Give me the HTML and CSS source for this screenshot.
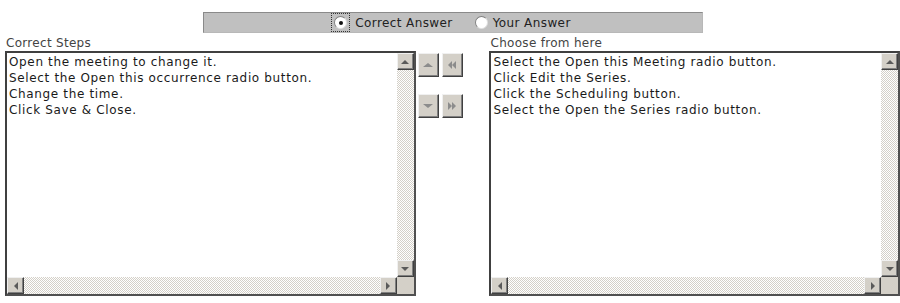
FILE: index.html
```html
<!DOCTYPE html>
<html lang="en">
<head>
    <meta charset="UTF-8">
    <title>Arrange Steps</title>
    <link rel="stylesheet" href="styles.css">
</head>
<body>

    <!-- answer toggle -->
    <div class="bar">
        <label class="opt">
            <span class="focus"><span class="radio checked"></span></span>
            Correct Answer
        </label>
        <label class="opt">
            <span class="radio"></span>
            Your Answer
        </label>
    </div>

    <div class="panels">
        <div class="column">
            <div class="caption">Correct Steps</div>
            <div class="listbox">
                <div class="items">
                    <div>Open the meeting to change it.</div>
                    <div>Select the Open this occurrence radio button.</div>
                    <div>Change the time.</div>
                    <div>Click Save &amp; Close.</div>
                </div>
                <div class="vscroll">
                    <div class="sbtn"><span class="tri up"></span></div>
                    <div class="track"></div>
                    <div class="sbtn"><span class="tri down"></span></div>
                </div>
                <div class="hscroll">
                    <div class="sbtn"><span class="tri left"></span></div>
                    <div class="track"></div>
                    <div class="sbtn"><span class="tri right"></span></div>
                </div>
                <div class="corner"></div>
            </div>
        </div>

        <!-- move buttons -->
        <div class="controls">
            <div class="row">
                <div class="mbtn"><span class="tri up"></span></div>
                <div class="mbtn"><span class="tri left"></span><span class="tri left"></span></div>
            </div>
            <div class="row">
                <div class="mbtn"><span class="tri down"></span></div>
                <div class="mbtn"><span class="tri right"></span><span class="tri right"></span></div>
            </div>
        </div>

        <div class="column">
            <div class="caption">Choose from here</div>
            <div class="listbox">
                <div class="items">
                    <div>Select the Open this Meeting radio button.</div>
                    <div>Click Edit the Series.</div>
                    <div>Click the Scheduling button.</div>
                    <div>Select the Open the Series radio button.</div>
                </div>
                <div class="vscroll">
                    <div class="sbtn"><span class="tri up"></span></div>
                    <div class="track"></div>
                    <div class="sbtn"><span class="tri down"></span></div>
                </div>
                <div class="hscroll">
                    <div class="sbtn"><span class="tri left"></span></div>
                    <div class="track"></div>
                    <div class="sbtn"><span class="tri right"></span></div>
                </div>
                <div class="corner"></div>
            </div>
        </div>
    </div>

</body>
</html>
```

FILE: styles.css
```css
body {
    margin: 0;
    font-family: "DejaVu Sans", Verdana, sans-serif;
    font-size: 12px;
    color: #222;
    background: #fff;
}

.bar {
    width: 498px;
    height: 19px;
    margin: 12px 0 0 203px;
    background-color: #c0c0c0;
    border: 1px solid #8a8a8a;
    border-right-color: #b8b8b8;
    border-bottom-color: #b8b8b8;
    display: flex;
    justify-content: center;
    align-items: center;
    gap: 22px;
}

.opt {
    display: flex;
    align-items: center;
    gap: 5px;
    color: #222;
    letter-spacing: 0.4px;
}

.focus {
    display: flex;
    padding: 3px;
    outline: 1px dotted #333;
    outline-offset: -1px;
    margin-left: -4px;
}

.radio {
    width: 11px;
    height: 11px;
    border-radius: 50%;
    background: #fff;
    border: 1px solid #808080;
    border-right-color: #e0e0e0;
    border-bottom-color: #e0e0e0;
    display: flex;
    justify-content: center;
    align-items: center;
}

.radio.checked::after {
    content: "";
    width: 4px;
    height: 4px;
    border-radius: 50%;
    background: #111;
}

.panels {
    display: flex;
    padding-left: 5px;
    margin-top: 2px;
}

.column {
    width: 411px;
    display: flex;
    flex-direction: column;
}

.caption {
    height: 16px;
    line-height: 16px;
    padding-left: 1px;
    color: #444;
    letter-spacing: 0.3px;
}

.listbox {
    height: 241px;
    border: 2px solid #404040;
    border-right-color: #505050;
    border-bottom-color: #505050;
    display: grid;
    grid-template-columns: 1fr 17px;
    grid-template-rows: 1fr 17px;
    background: #fff;
}

.items {
    padding: 1px 2px;
    line-height: 16px;
    color: #1a1a1a;
    white-space: nowrap;
    overflow: hidden;
    letter-spacing: 0.65px;
}

.vscroll {
    display: flex;
    flex-direction: column;
}

.hscroll {
    display: flex;
}

.track {
    flex: 1;
    background: conic-gradient(#d4d0c8 25%, #fff 0 50%, #d4d0c8 0 75%, #fff 0) 0 0 / 2px 2px;
}

.sbtn,
.mbtn {
    background-color: #d4d0c8;
    border: 1px solid #404040;
    border-top-color: #f0f0f0;
    border-left-color: #f0f0f0;
    box-shadow: inset -1px -1px #808080;
    display: flex;
    justify-content: center;
    align-items: center;
    box-sizing: border-box;
}

.sbtn {
    width: 17px;
    height: 17px;
}

.corner {
    background-color: #d4d0c8;
}

.tri {
    width: 0;
    height: 0;
    border: 4px solid transparent;
}

.tri.up {
    border-top: 0;
    border-bottom-color: #5a5a5a;
}

.tri.down {
    border-bottom: 0;
    border-top-color: #5a5a5a;
}

.tri.left {
    border-left: 0;
    border-right-color: #5a5a5a;
}

.tri.right {
    border-right: 0;
    border-left-color: #5a5a5a;
}

.controls {
    display: flex;
    flex-direction: column;
    gap: 17px;
    padding: 18px 0 0 2px;
    width: 72px;
}

.row {
    display: flex;
    gap: 3px;
}

.mbtn {
    width: 21px;
    height: 24px;
}

.mbtn .tri {
    border-width: 4px;
}

.mbtn .tri.up,
.mbtn .tri.down {
    border-width: 4px;
    border-left-width: 5px;
    border-right-width: 5px;
}

.mbtn .tri.up { border-top: 0; border-bottom-color: #8c8c8c; }
.mbtn .tri.down { border-bottom: 0; border-top-color: #8c8c8c; }
.mbtn .tri.left { border-left: 0; border-right-color: #8c8c8c; }
.mbtn .tri.right { border-right: 0; border-left-color: #8c8c8c; }
```
